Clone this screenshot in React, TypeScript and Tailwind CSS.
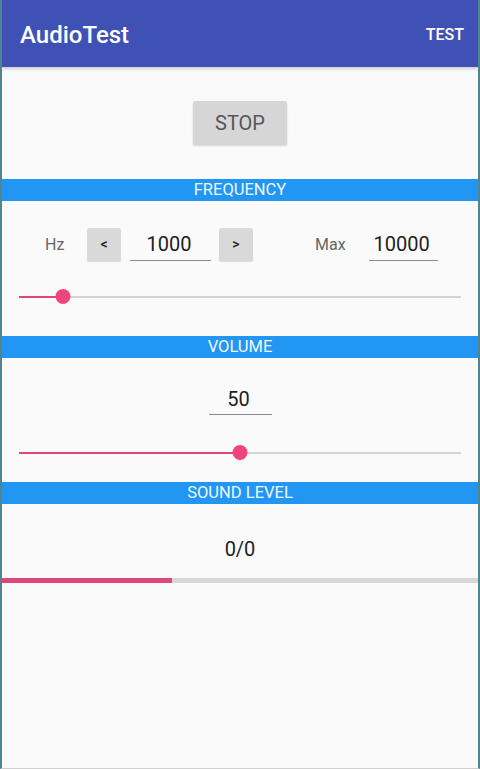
import React from 'react';

const font = { fontFamily: 'Roboto, "Noto Sans", sans-serif' };

function SectionHeader({ title }: { title: string }) {
  return (
    <div className="h-[22px] bg-[#2196f3] flex items-center justify-center text-[16.5px] leading-none text-[#f1f8fe]">
      {title}
    </div>
  );
}

function Slider({ value, max }: { value: number; max: number }) {
  const pct = (value / max) * 100;
  return (
    <div className="px-[17px]">
      <div className="relative h-[15px] flex items-center">
        <div className="w-full h-[2px] bg-[#d4d4d4]" />
        <div className="absolute left-0 h-[2px] bg-[#e2457c]" style={{ width: `${pct}%` }} />
        <div
          className="absolute w-[15px] h-[15px] rounded-full bg-[#ee4580] -translate-x-1/2"
          style={{ left: `${pct}%` }}
        />
      </div>
    </div>
  );
}

function NumberField({ value, width }: { value: string; width: string }) {
  return (
    <div className={`${width} h-[32px] border-b border-[#8a8a8a] flex items-center justify-center pr-[3px] text-[20px] text-[#1e1e1e]`}>
      {value}
    </div>
  );
}

function StepButton({ label }: { label: string }) {
  return (
    <div className="w-[34px] h-[33px] rounded-[2px] bg-[#d9d9d9] shadow-[0_1px_1px_rgba(0,0,0,0.12)] flex items-center justify-center text-[14px] font-medium text-[#222]">
      {label}
    </div>
  );
}

export default function App() {
  return (
    <div
      style={font}
      className="w-[480px] h-[769px] bg-[#fafafa] border-x-2 border-[#4f8590] border-b border-b-[#cfcfcf] flex flex-col overflow-hidden"
    >
      {/* App bar */}
      <div className="h-[67px] shrink-0 bg-[#3f51b5] pl-[18px] pr-[14px] pt-[2px] flex items-center justify-between shadow-[0_2px_3px_rgba(0,0,0,0.18)] relative z-10">
        <span className="text-[24px] font-medium text-white">AudioTest</span>
        <span className="text-[16px] font-medium text-white">TEST</span>
      </div>

      {/* Stop button */}
      <div className="flex justify-center pt-[34px] pb-[34px]">
        <div className="w-[94px] h-[44px] rounded-[2px] bg-[#d6d6d6] shadow-[0_1px_2px_rgba(0,0,0,0.15)] flex items-center justify-center text-[20px] text-[#555]">
          STOP
        </div>
      </div>

      {/* Frequency */}
      <SectionHeader title="FREQUENCY" />
      <div className="h-[135px] flex flex-col">
        <div className="flex items-center mt-[27px] pl-[43px]">
          <span className="text-[16px] text-[#666] w-[20px]">Hz</span>
          <div className="ml-[22px]">
            <StepButton label="<" />
          </div>
          <div className="ml-[9px]">
            <NumberField value="1000" width="w-[81px]" />
          </div>
          <div className="ml-[8px]">
            <StepButton label=">" />
          </div>
          <span className="ml-[62px] text-[16px] text-[#666]">Max</span>
          <div className="ml-[23px]">
            <NumberField value="10000" width="w-[69px]" />
          </div>
        </div>
        <div className="mt-[28px]">
          <Slider value={1000} max={10000} />
        </div>
      </div>

      {/* Volume */}
      <SectionHeader title="VOLUME" />
      <div className="h-[124px] flex flex-col">
        <div className="flex justify-center mt-[25px]">
          <NumberField value="50" width="w-[63px]" />
        </div>
        <div className="mt-[30px]">
          <Slider value={50} max={100} />
        </div>
      </div>

      {/* Sound level */}
      <SectionHeader title="SOUND LEVEL" />
      <div className="flex flex-col">
        <div className="h-[74px] flex items-center justify-center pt-[15px] text-[20px] text-[#1e1e1e]">
          0/0
        </div>
        <div className="h-[5px] bg-[#d6d6d6] flex">
          <div className="w-[35.7%] bg-[#e0457b]" />
        </div>
      </div>
    </div>
  );
}
